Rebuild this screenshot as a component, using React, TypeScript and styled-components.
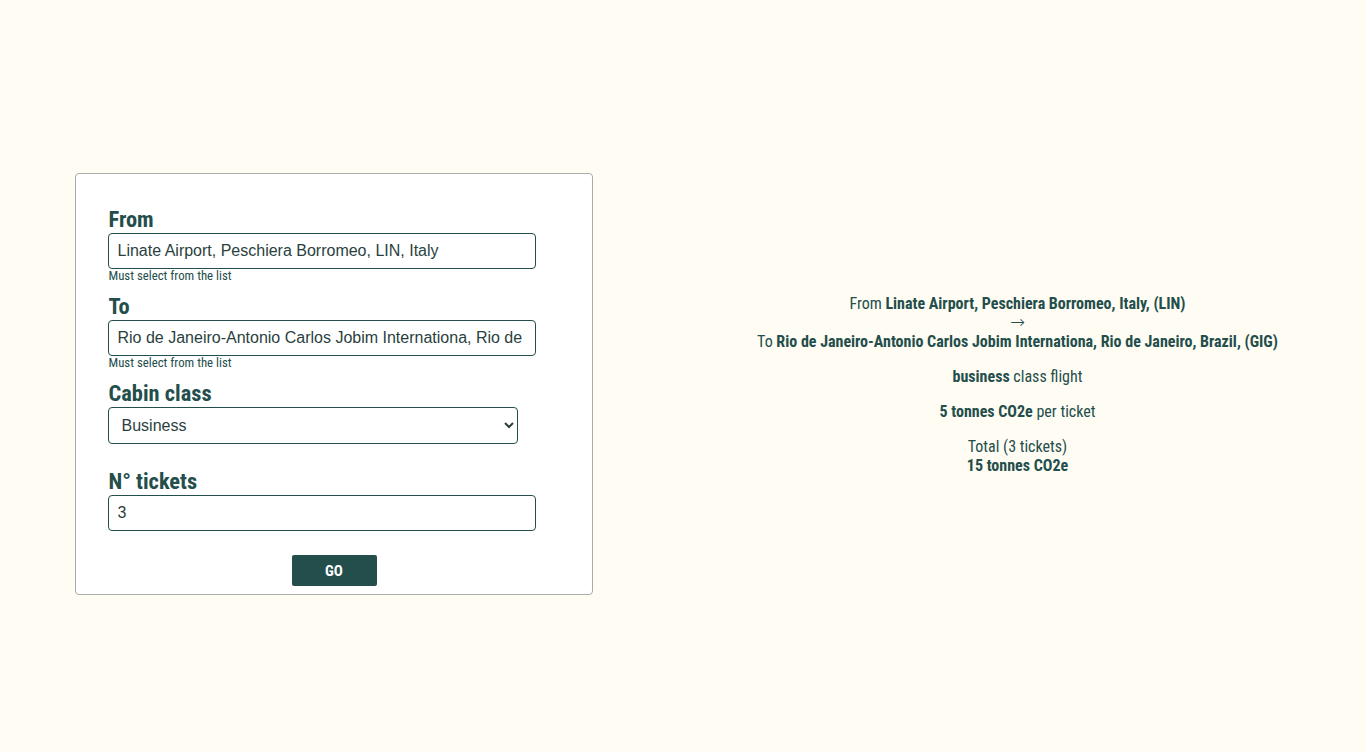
import React from "react";
import styled, { createGlobalStyle } from "styled-components";

const teal = "#234e4c";

const GlobalStyle = createGlobalStyle`
  html, body {
    margin: 0;
    padding: 0;
    background: #fffcf3;
  }
  body {
    font-family: "Roboto Condensed", "Roboto", sans-serif;
    color: ${teal};
  }
`;

const Page = styled.main`
  box-sizing: border-box;
  min-height: 100vh;
  padding: 16px 15px 0 0;
  display: grid;
  grid-template-columns: 1fr 1fr;
  column-gap: 17px;
  align-items: center;
`;

const Column = styled.section`
  display: flex;
  justify-content: center;
`;

const Card = styled.form`
  box-sizing: border-box;
  width: 518px;
  background: #fff;
  border: 1px solid #aaaaaa;
  border-radius: 4px;
  padding: 32px 32px 8px 32px;
  display: flex;
  flex-direction: column;
`;

const Field = styled.div`
  display: flex;
  flex-direction: column;
  margin-bottom: 10px;
`;

const Label = styled.label`
  display: block;
  padding-left: 1px;
  font-family: "Roboto Condensed", "Roboto", sans-serif;
  font-size: 22.4px;
  font-weight: 700;
  line-height: 26px;
  color: ${teal};
  margin-bottom: 1px;
`;

const TextInput = styled.input`
  box-sizing: border-box;
  width: 428px;
  height: 36px;
  margin: 0;
  padding: 0 9px;
  border: 1px solid ${teal};
  border-radius: 4px;
  background: #fff;
  font-family: "Liberation Sans", Arial, sans-serif;
  font-size: 16px;
  color: #2a3f3e;
  outline: none;
`;

const Select = styled.select`
  box-sizing: border-box;
  width: 410px;
  height: 37px;
  margin: 0;
  padding: 0 9px;
  border: 1px solid ${teal};
  border-radius: 4px;
  background: #fff;
  font-family: "Liberation Sans", Arial, sans-serif;
  font-size: 16px;
  color: #2a3f3e;
  outline: none;
`;

const Hint = styled.small`
  display: block;
  height: 14px;
  padding-left: 1px;
  font-family: "Roboto Condensed", "Roboto", sans-serif;
  font-size: 12.8px;
  line-height: 14px;
  color: ${teal};
`;

const GoButton = styled.button`
  align-self: center;
  width: 85px;
  height: 31px;
  margin: 0 0 0 1px;
  border: none;
  border-radius: 2px;
  background: ${teal};
  color: #fff;
  font-family: "Roboto Condensed", "Roboto", sans-serif;
  font-size: 15px;
  font-weight: 700;
  cursor: pointer;
`;

const Result = styled.div`
  text-align: center;
  font-family: "Roboto Condensed", "Roboto", sans-serif;
  font-size: 16px;
  line-height: 19px;
  color: ${teal};
`;

const Para = styled.p`
  margin: 16px 0;
  &:first-child { margin-top: 0; }
  &:last-child { margin-bottom: 0; }
`;

const Arrow = styled.span`
  font-family: "DejaVu Sans", sans-serif;
  font-size: 17.5px;
  font-weight: 200;
`;

export default function App() {
  return (
    <>
      <GlobalStyle />
      <Page>
        <Column>
          <Card onSubmit={(e) => e.preventDefault()}>
            <Field>
              <Label htmlFor="from">From</Label>
              <TextInput id="from" defaultValue="Linate Airport, Peschiera Borromeo, LIN, Italy" />
              <Hint>Must select from the list</Hint>
            </Field>
            <Field>
              <Label htmlFor="to">To</Label>
              <TextInput id="to" defaultValue="Rio de Janeiro-Antonio Carlos Jobim Internationa, Rio de Janeiro, GIG, Brazil" />
              <Hint>Must select from the list</Hint>
            </Field>
            <Field>
              <Label htmlFor="cabin">Cabin class</Label>
              <Select id="cabin" defaultValue="business">
                <option value="economy">Economy</option>
                <option value="premium">Premium economy</option>
                <option value="business">Business</option>
                <option value="first">First</option>
              </Select>
              <Hint />
            </Field>
            <Field>
              <Label htmlFor="tickets">N° tickets</Label>
              <TextInput id="tickets" defaultValue="3" />
              <Hint />
            </Field>
            <GoButton type="submit">GO</GoButton>
          </Card>
        </Column>
        <Column>
          <Result>
            <Para>
              From <b>Linate Airport, Peschiera Borromeo, Italy, (LIN)</b>
              <br />
              <Arrow>→</Arrow>
              <br />
              To <b>Rio de Janeiro-Antonio Carlos Jobim Internationa, Rio de Janeiro, Brazil, (GIG)</b>
            </Para>
            <Para>
              <b>business</b> class flight
            </Para>
            <Para>
              <b>5 tonnes CO2e</b> per ticket
            </Para>
            <Para>
              Total (3 tickets)
              <br />
              <b>15 tonnes CO2e</b>
            </Para>
          </Result>
        </Column>
      </Page>
    </>
  );
}
